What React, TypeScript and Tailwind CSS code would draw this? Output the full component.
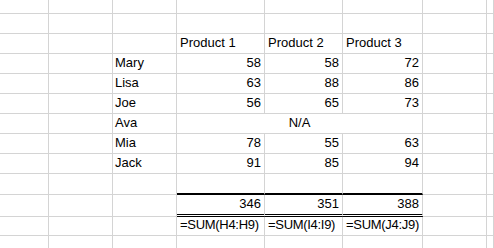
type Row = {
  h: string;
  name?: string;
  vals?: (number | string)[];
  kind?: 'header' | 'merged' | 'rule' | 'total' | 'formula';
};

const rows: Row[] = [
  { h: 'h-[14px]' },
  { h: 'h-[20px]' },
  { h: 'h-[20px]', kind: 'header', vals: ['Product 1', 'Product 2', 'Product 3'] },
  { h: 'h-[20px]', name: 'Mary', vals: [58, 58, 72] },
  { h: 'h-[20px]', name: 'Lisa', vals: [63, 88, 86] },
  { h: 'h-[20px]', name: 'Joe', vals: [56, 65, 73] },
  { h: 'h-[20px]', name: 'Ava', kind: 'merged' },
  { h: 'h-[20px]', name: 'Mia', vals: [78, 55, 63] },
  { h: 'h-[20px]', name: 'Jack', vals: [91, 85, 94] },
  { h: 'h-[21px]', kind: 'rule' },
  { h: 'h-[22px]', kind: 'total', vals: [346, 351, 388] },
  { h: 'h-[19px]', kind: 'formula', vals: ['=SUM(H4:H9)', '=SUM(I4:I9)', '=SUM(J4:J9)'] },
  { h: 'h-[14px]' },
];

const grid = 'border-r border-b border-[#d4d4d4]';

function Blank({ h }: { h: string }) {
  return <div className={`${h} ${grid}`} />;
}

export default function App() {
  return (
    <div
      className="w-[494px] h-[248px] overflow-hidden bg-white text-[13px] text-black"
      style={{ fontFamily: '"Liberation Sans", Arial, sans-serif' }}
    >
      <div className="grid grid-cols-[49px_64px_64px_88px_78px_80px_64px_1fr]">
        {rows.map((r, i) => {
          const left = (
            <>
              <Blank h={r.h} />
              <Blank h={r.h} />
              <div className={`${r.h} ${grid} flex items-end pl-[2px] pb-[1px]`}>{r.name}</div>
            </>
          );
          const right = (
            <>
              <Blank h={r.h} />
              <Blank h={r.h} />
            </>
          );

          let middle;
          if (r.kind === 'merged') {
            middle = (
              <div className={`${r.h} col-span-3 ${grid} flex items-end justify-center pb-[1px]`}>N/A</div>
            );
          } else if (r.kind === 'rule') {
            middle = [0, 1, 2].map((j) => (
              <div key={j} className={`${r.h} border-r border-[#d4d4d4] border-b-2 border-b-black`} />
            ));
          } else if (r.kind === 'total') {
            middle = (r.vals ?? []).map((v, j) => (
              <div
                key={j}
                className={`${r.h} border-r border-[#d4d4d4] border-double border-b-[3px] border-b-black flex items-end justify-end pr-[3px] pb-[1px]`}
              >
                {v}
              </div>
            ));
          } else if (r.kind === 'formula') {
            middle = (r.vals ?? []).map((v, j) => (
              <div
                key={j}
                className={`${r.h} ${grid} flex items-end pl-[3px] pb-[1px] whitespace-nowrap tracking-[-0.3px]`}
              >
                {v}
              </div>
            ));
          } else if (r.kind === 'header') {
            middle = (r.vals ?? []).map((v, j) => (
              <div key={j} className={`${r.h} ${grid} flex items-end pl-[3px] pb-[1px] whitespace-nowrap`}>
                {v}
              </div>
            ));
          } else if (r.vals) {
            middle = r.vals.map((v, j) => (
              <div key={j} className={`${r.h} ${grid} flex items-end justify-end pr-[3px] pb-[1px]`}>
                {v}
              </div>
            ));
          } else {
            middle = [0, 1, 2].map((j) => <Blank key={j} h={r.h} />);
          }

          return (
            <div key={i} className="contents">
              {left}
              {middle}
              {right}
            </div>
          );
        })}
      </div>
    </div>
  );
}
